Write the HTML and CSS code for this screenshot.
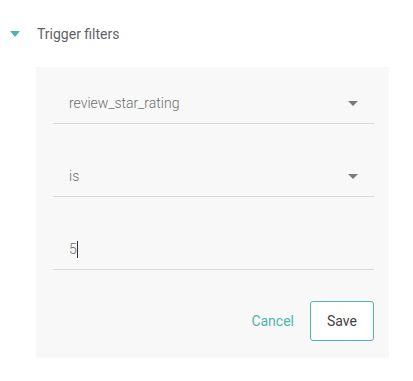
FILE: index.html
```html
<!DOCTYPE html>
<html>

<head>
    <title>Trigger filters</title>
    <meta charset="utf-8">
    <meta name="viewport" content="width=device-width, initial-scale=1.0">
    <link rel="stylesheet" href="styles.css">
</head>

<body>

    <section class="filters">
        <header class="filters_head">
            <span class="caret_icon"></span>
            <h3>Trigger filters</h3>
        </header>

        <div class="panel">
            <div class="felt">
                <span class="vaerdi">review_star_rating</span>
                <span class="pil"></span>
            </div>
            <div class="felt">
                <span class="vaerdi">is</span>
                <span class="pil"></span>
            </div>
            <div class="felt input">
                <span class="vaerdi">5</span><span class="markor"></span>
            </div>

            <div class="knapper">
                <button class="annuller">Cancel</button>
                <button class="gem">Save</button>
            </div>
        </div>
    </section>

</body>

</html>
```

FILE: styles.css
```css
html {
    margin: 0;
    padding: 0;
    background-color: #ffffff;
}

body {
    margin: 0;
    font-family: 'Roboto', 'Liberation Sans', sans-serif;
}

.filters_head {
    display: flex;
    align-items: center;
    height: 67px;
    padding-left: 10px;
}

.caret_icon {
    width: 0;
    height: 0;
    border-left: 5px solid transparent;
    border-right: 5px solid transparent;
    border-top: 6px solid #4db6ac;
    margin-top: 1px;
}

h3 {
    margin: 0 0 0 17px;
    font-size: 14px;
    font-weight: 400;
    color: #5f6368;
}

.panel {
    margin-left: 36px;
    width: 353px;
    background-color: #f8f8f8;
    padding: 0 15px 17px 17px;
    box-sizing: border-box;
}

.felt {
    display: flex;
    align-items: center;
    height: 56px;
    border-bottom: 1px solid #d9d9d9;
    padding: 0 16px;
    margin-top: 16px;
    font-size: 14px;
    font-weight: 300;
    color: #6f6f6f;
}

.felt:first-child {
    margin-top: 0;
}

.vaerdi {
    flex: 1;
    padding-top: 16px;
}

.input .vaerdi {
    flex: none;
}

.markor {
    width: 1px;
    height: 17px;
    background-color: #333333;
    margin-top: 16px;
}

.pil {
    width: 0;
    height: 0;
    border-left: 5px solid transparent;
    border-right: 5px solid transparent;
    border-top: 5px solid #7a7a7a;
    margin-top: 16px;
}

.knapper {
    display: flex;
    justify-content: flex-end;
    align-items: center;
    gap: 16px;
    margin-top: 31px;
}

button {
    font-family: 'Roboto', 'Liberation Sans', sans-serif;
    font-size: 14px;
    cursor: pointer;
}

.annuller {
    background-color: transparent;
    border: none;
    color: #4db6ac;
    padding: 0;
}

.gem {
    height: 40px;
    width: 64px;
    background-color: #ffffff;
    border: 1px solid #4db6ac;
    border-radius: 3px;
    color: #424242;
}
```
